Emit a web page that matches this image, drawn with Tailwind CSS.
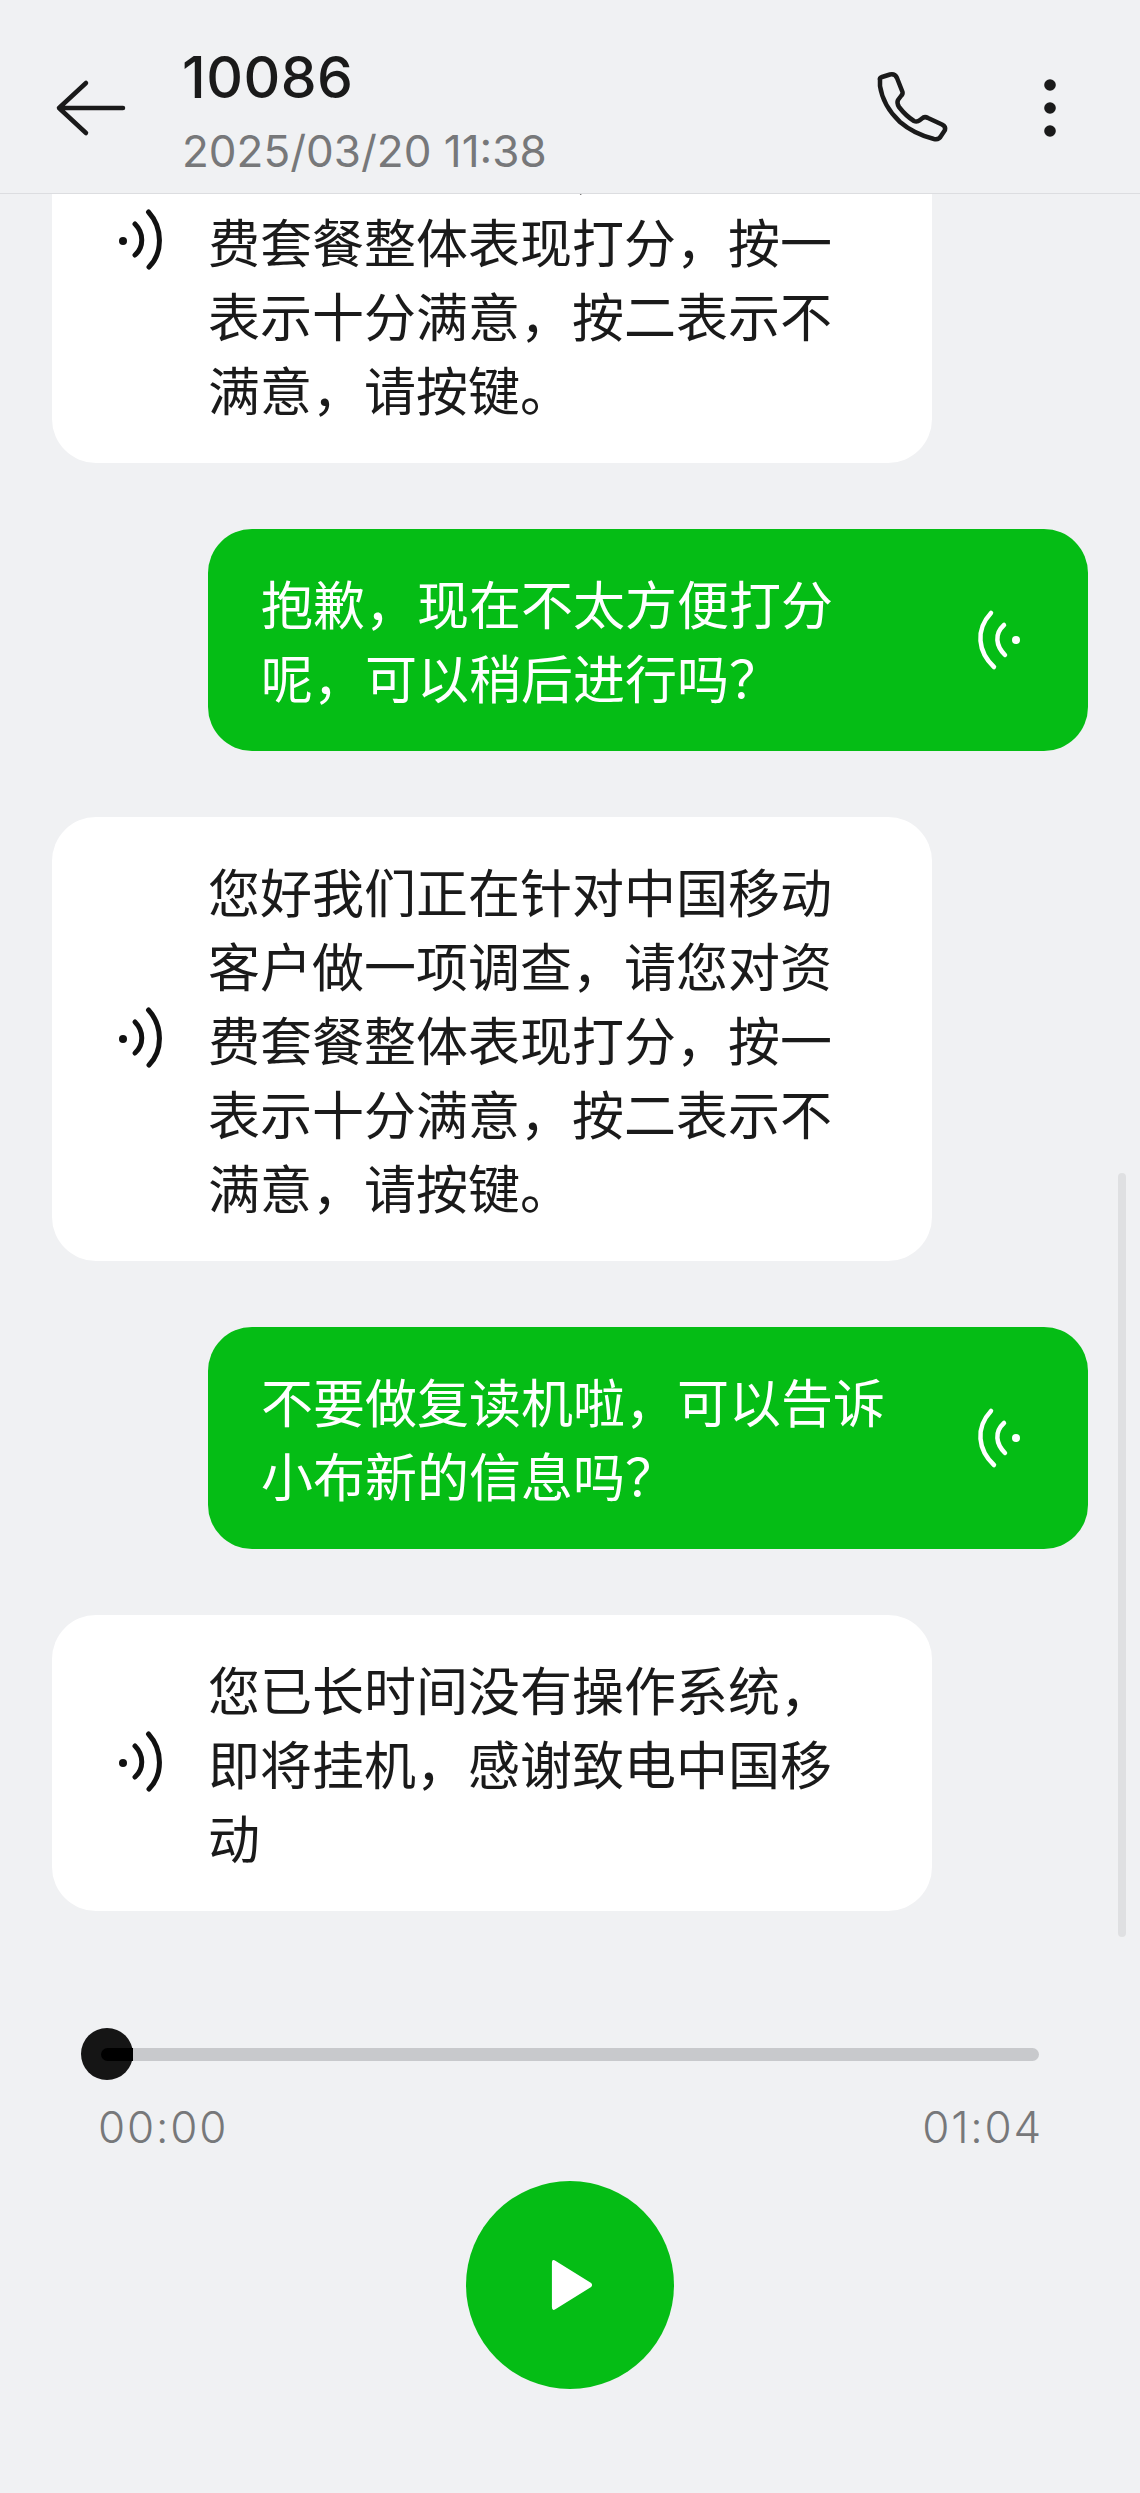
<!DOCTYPE html>
<html lang="zh-CN">
  <head>
    <meta charset="UTF-8" />
    <meta name="viewport" content="width=device-width, initial-scale=1.0" />
    <script src="https://cdn.jsdelivr.net/npm/@tailwindcss/browser@4"></script>
    <title>10086</title>
  </head>

  <body class="bg-[#f0f1f3] text-[#1a1a1a] font-['Inter','Noto_Sans_CJK_SC',sans-serif]">
    <div class="relative h-[2493px] w-[1140px] overflow-hidden flex flex-col">
      <!-- header -->
      <header class="relative z-10 h-[194px] shrink-0 flex items-start bg-[#f0f1f3] border-b border-[#dcdde0]">
        <svg class="mt-[76px] ml-[54px] w-[74px] h-[64px]" viewBox="0 0 74 64" fill="none" stroke="#1a1a1a" stroke-width="4.5" stroke-linecap="round" stroke-linejoin="round">
          <path d="M32 7 L5 32 L32 57 M5 32 H69" />
        </svg>
        <div class="ml-[54px] mt-[46px] flex flex-col">
          <h1 class="text-[57px] leading-[64px] font-medium tracking-[0.5px]">10086</h1>
          <p class="mt-[14px] text-[44px] leading-[54px] text-[#77787a]">2025/03/20 11:38</p>
        </div>
        <svg class="ml-auto mt-[50px] w-[220px] h-[110px]" viewBox="0 0 220 110" fill="none" stroke="#1a1a1a" stroke-width="4.5" stroke-linejoin="round">
          <path d="M20 30 Q19 28 22 27 L30 24.5 Q35 23.5 37 28 L42.5 42 Q43 44 41 46 L38 50 Q36.5 53 39 57 Q46 66 54 71 Q57 72.5 60 70 L62 68.5 Q64.5 66 68 68 L82 74.5 Q86 76.5 85 80 L81 86 Q79 90 74 89 Q54 84 40 72 Q23 56 20 36 Z" />
          <circle cx="190" cy="35" r="5.8" fill="#1a1a1a" stroke="none" />
          <circle cx="190" cy="58" r="5.8" fill="#1a1a1a" stroke="none" />
          <circle cx="190" cy="81" r="5.8" fill="#1a1a1a" stroke="none" />
        </svg>
        <div class="w-[60px]"></div>
      </header>

      <!-- messages, scrolled so the first one sits under the header -->
      <main class="flex-1 overflow-hidden flex flex-col gap-[66px] px-[52px] text-[52px] leading-[74px]">
        <div class="mt-[-175px] w-[880px] shrink-0 flex items-center rounded-[44px] bg-white py-[37px]">
          <svg class="ml-[58px] w-[60px] h-[80px] shrink-0" viewBox="0 0 60 80" fill="none" stroke="#111" stroke-width="5" stroke-linecap="round">
            <circle cx="13" cy="40" r="4" fill="#111" stroke="none" />
            <path d="M25 23 C34 32 34 46 25 54" />
            <path d="M38.5 11 C53 27 53 52 39 66" />
          </svg>
          <p class="ml-[38px] w-[630px] translate-y-[4px]">您好我们正在针对中国移动客户做一项调查，请您对资费套餐整体表现打分，按一表示十分满意，按二表示不满意，请按键。</p>
        </div>

        <div class="ml-[156px] w-[880px] shrink-0 flex items-center justify-between rounded-[44px] bg-[#05bd15] py-[37px] pl-[53px] pr-[58px] text-white">
          <p class="w-[630px] translate-y-[4px]">抱歉，现在不太方便打分呢，可以稍后进行吗？</p>
          <svg class="w-[60px] h-[80px] shrink-0" viewBox="0 0 60 80" fill="none" stroke="#fff" stroke-width="4.5" stroke-linecap="round">
            <circle cx="46" cy="40" r="4" fill="#fff" stroke="none" />
            <path d="M34 25 C24 34 26 46 35 55" />
            <path d="M21 13 C5 30 8 52 24 67" />
          </svg>
        </div>

        <div class="w-[880px] shrink-0 flex items-center rounded-[44px] bg-white py-[37px]">
          <svg class="ml-[58px] w-[60px] h-[80px] shrink-0" viewBox="0 0 60 80" fill="none" stroke="#111" stroke-width="5" stroke-linecap="round">
            <circle cx="13" cy="40" r="4" fill="#111" stroke="none" />
            <path d="M25 23 C34 32 34 46 25 54" />
            <path d="M38.5 11 C53 27 53 52 39 66" />
          </svg>
          <p class="ml-[38px] w-[630px] translate-y-[4px]">您好我们正在针对中国移动客户做一项调查，请您对资费套餐整体表现打分，按一表示十分满意，按二表示不满意，请按键。</p>
        </div>

        <div class="ml-[156px] w-[880px] shrink-0 flex items-center justify-between rounded-[44px] bg-[#05bd15] py-[37px] pl-[53px] pr-[58px] text-white">
          <p class="w-[630px] translate-y-[4px]">不要做复读机啦，可以告诉小布新的信息吗？</p>
          <svg class="w-[60px] h-[80px] shrink-0" viewBox="0 0 60 80" fill="none" stroke="#fff" stroke-width="4.5" stroke-linecap="round">
            <circle cx="46" cy="40" r="4" fill="#fff" stroke="none" />
            <path d="M34 25 C24 34 26 46 35 55" />
            <path d="M21 13 C5 30 8 52 24 67" />
          </svg>
        </div>

        <div class="w-[880px] shrink-0 flex items-center rounded-[44px] bg-white py-[37px]">
          <svg class="ml-[58px] w-[60px] h-[80px] shrink-0" viewBox="0 0 60 80" fill="none" stroke="#111" stroke-width="5" stroke-linecap="round">
            <circle cx="13" cy="40" r="4" fill="#111" stroke="none" />
            <path d="M25 23 C34 32 34 46 25 54" />
            <path d="M38.5 11 C53 27 53 52 39 66" />
          </svg>
          <p class="ml-[38px] w-[630px] translate-y-[4px]">您已长时间没有操作系统，即将挂机，感谢致电中国移动</p>
        </div>
      </main>

      <!-- scrollbar -->
      <div class="absolute left-[1118px] top-[1173px] w-[8px] h-[764px] rounded-full bg-[#dfe0e2]"></div>

      <!-- player -->
      <section class="h-[445px] shrink-0 flex flex-col px-[100px]">
        <div class="relative ml-[10px] mr-[1px] h-[13px] rounded-full bg-[#c8c9cc]">
          <div class="absolute left-[-29px] top-[-20px] w-[52px] h-[52px] rounded-full bg-[#151515]"></div>
          <div class="absolute left-[-9px] top-0 w-[32px] h-[13px] rounded-l-full bg-black"></div>
        </div>
        <div class="mt-[39px] ml-[-2px] mr-[-3px] flex justify-between text-[44px] leading-[54px] font-light text-[#77787a] tracking-[1.8px]">
          <span>00:00</span>
          <span>01:04</span>
        </div>
        <button class="mt-[27px] mx-auto w-[208px] h-[208px] rounded-full bg-[#05bd15] flex items-center justify-center">
          <svg class="ml-[4px] w-[44px] h-[54px]" viewBox="0 0 46 56" fill="#fff">
            <path d="M2 5 Q2 0 6 3 L43 26 Q45 28 43 30 L6 53 Q2 56 2 51 Z" />
          </svg>
        </button>
      </section>
    </div>
  </body>
</html>
